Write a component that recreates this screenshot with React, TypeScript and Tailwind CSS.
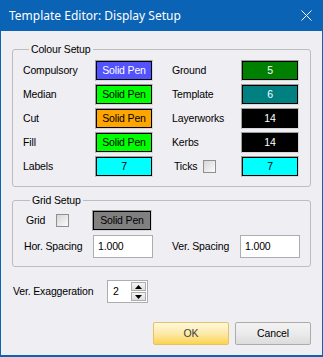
import React from 'react'

const font = { fontFamily: '"Liberation Sans", Arial, sans-serif' }

function Swatch({ bg, fg, children }: { bg: string; fg: string; children: React.ReactNode }) {
  return (
    <div className="h-[21px] w-[58px] border border-[#9c9c9c] border-r-[#d8d8d8] border-b-[#d8d8d8]">
      <div className={`h-full w-full border border-black flex items-center justify-center ${bg} ${fg}`}>
        {children}
      </div>
    </div>
  )
}

function Checkbox() {
  return <div className="h-[13px] w-[13px] border border-[#8e8f8f] bg-linear-to-br from-[#d6d6d6] to-[#fbfbfb]" />
}

function Group({ title, className, children }: { title: string; className?: string; children: React.ReactNode }) {
  return (
    <fieldset className={`border border-[#bdbdbd] rounded-[3px] ${className ?? ''}`}>
      <legend className="ml-[6px] px-[2px] leading-[13px]">{title}</legend>
      {children}
    </fieldset>
  )
}

export default function App() {
  const left = [
    { label: 'Compulsory', bg: 'bg-[#5252ff]', fg: 'text-white', value: 'Solid Pen' },
    { label: 'Median', bg: 'bg-[#00ff00]', fg: 'text-black', value: 'Solid Pen' },
    { label: 'Cut', bg: 'bg-[#ffa500]', fg: 'text-black', value: 'Solid Pen' },
    { label: 'Fill', bg: 'bg-[#00ff00]', fg: 'text-black', value: 'Solid Pen' },
    { label: 'Labels', bg: 'bg-[#00ffff]', fg: 'text-black', value: '7' },
  ]
  const right = [
    { label: 'Ground', bg: 'bg-[#008000]', fg: 'text-white', value: '5' },
    { label: 'Template', bg: 'bg-[#008080]', fg: 'text-white', value: '6' },
    { label: 'Layerworks', bg: 'bg-black', fg: 'text-white', value: '14' },
    { label: 'Kerbs', bg: 'bg-black', fg: 'text-white', value: '14' },
    { label: 'Ticks', bg: 'bg-[#00ffff]', fg: 'text-black', value: '7' },
  ]

  return (
    <div className="w-[323px] h-[357px] bg-[#0b63b5] flex flex-col text-[10.5px] tracking-[-0.15px] text-black" style={font}>
      {/* Title bar */}
      <div className="h-[31px] shrink-0 flex items-center justify-between pl-[9px] pr-[10px] text-white tracking-normal">
        <span className="text-[12px]" style={{ fontFamily: '"Noto Sans", "Open Sans", sans-serif' }}>
          Template Editor: Display Setup
        </span>
        <svg width="11" height="11" viewBox="0 0 11 11" className="mr-[1px]">
          <path d="M0.5 0.5 L10.5 10.5 M10.5 0.5 L0.5 10.5" stroke="white" strokeWidth="1" />
        </svg>
      </div>

      {/* Body */}
      <div className="flex-1 mx-[1px] mb-[2px] bg-[#efeef3] px-[11px] flex flex-col">
        <Group title="Colour Setup" className="mt-[12px] w-[299px] pt-[4px] pb-[9px] pl-[10px]">
          <div className="grid grid-cols-[72px_58px_19px_69px_58px] auto-rows-[21px] gap-y-[3px]">
            {left.map((l, i) => {
              const r = right[i]
              return (
                <React.Fragment key={l.label}>
                  <div className="flex items-center">{l.label}</div>
                  <Swatch bg={l.bg} fg={l.fg}>{l.value}</Swatch>
                  <div />
                  {r.label === 'Ticks' ? (
                    <div className="flex items-center pl-[2px] gap-[6px]">
                      <span>Ticks</span>
                      <Checkbox />
                    </div>
                  ) : (
                    <div className="flex items-center">{r.label}</div>
                  )}
                  <Swatch bg={r.bg} fg={r.fg}>{r.value}</Swatch>
                </React.Fragment>
              )
            })}
          </div>
        </Group>

        <Group title="Grid Setup" className="mt-[7px] w-[299px] pt-[3px] pb-[8px] pl-[11px]">
          <div className="flex items-center h-[21px]">
            <span className="ml-[2px] w-[30px]">Grid</span>
            <Checkbox />
            <div className="ml-[23px]">
              <div className="h-[21px] w-[60px] border border-[#9c9c9c] border-r-[#d8d8d8] border-b-[#d8d8d8]">
                <div className="h-full w-full border border-black bg-[#808080] flex items-center justify-center">
                  Solid Pen
                </div>
              </div>
            </div>
          </div>
          <div className="flex items-center mt-[4px] h-[23px]">
            <span className="w-[69px]">Hor. Spacing</span>
            <div className="h-[23px] w-[60px] border border-[#abadb3] bg-white flex items-center pl-[4px]">1.000</div>
            <span className="ml-[19px] w-[68px]">Ver. Spacing</span>
            <div className="h-[23px] w-[60px] border border-[#abadb3] bg-white flex items-center pl-[4px]">1.000</div>
          </div>
        </Group>

        <div className="flex items-center mt-[13px] ml-[1px]">
          <span className="w-[94px]">Ver. Exaggeration</span>
          <div className="h-[23px] w-[41px] border border-[#abadb3] bg-white flex items-center">
            <span className="pl-[5px] flex-1">2</span>
            <div className="flex flex-col h-full py-[1px] pr-[1px] gap-[1px]">
              <div className="flex-1 w-[15px] border border-[#adadad] bg-linear-to-b from-[#f4f4f4] to-[#dedede] flex items-center justify-center">
                <svg width="7" height="4" viewBox="0 0 7 4"><path d="M3.5 0 L7 4 L0 4 Z" fill="black" /></svg>
              </div>
              <div className="flex-1 w-[15px] border border-[#adadad] bg-linear-to-b from-[#f4f4f4] to-[#dedede] flex items-center justify-center">
                <svg width="7" height="4" viewBox="0 0 7 4"><path d="M0 0 L7 0 L3.5 4 Z" fill="black" /></svg>
              </div>
            </div>
          </div>
        </div>

        <div className="mt-auto mb-[10px] flex justify-end gap-[6px]">
          <button className="h-[23px] w-[76px] rounded-[2px] border border-[#e5c365] bg-linear-to-b from-[#fff8dd] via-[#fde9a8] to-[#fcd44a] text-[#3c3c3c]">
            OK
          </button>
          <button className="h-[23px] w-[76px] rounded-[2px] border border-[#acacac] bg-linear-to-b from-[#f3f3f3] via-[#ebebeb] to-[#dcdcdc]">
            Cancel
          </button>
        </div>
      </div>
    </div>
  )
}
